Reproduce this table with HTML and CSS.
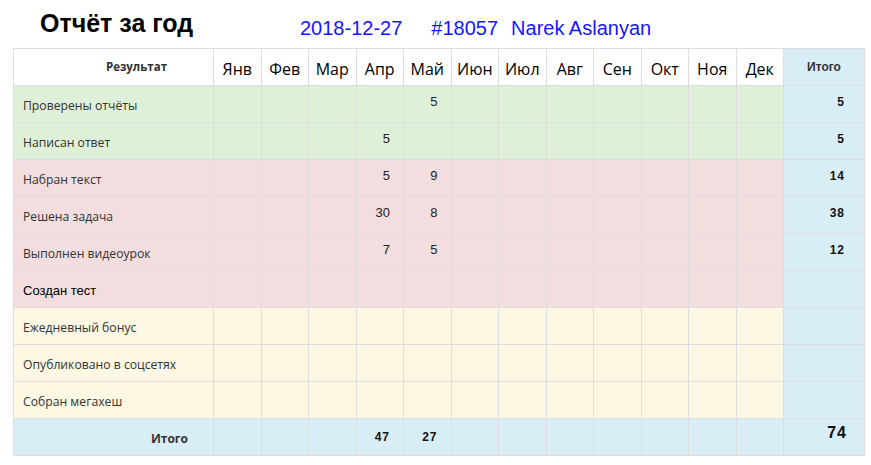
FILE: index.html
```
<!DOCTYPE html>
<html lang="ru">
<head>
  <meta charset="UTF-8" />
  <title>Отчёт за год</title>
  <link rel="stylesheet" href="styles.css">
</head>
<body>

<div class="top">
  <h2>Отчёт за год</h2>
  <div class="meta">
    <span>2018-12-27</span>
    <span class="num">#18057</span>
    <span class="name">Narek Aslanyan</span>
  </div>
</div>

<table class="report">
  <colgroup>
    <col class="c-label">
    <col class="c-month"><col class="c-month"><col class="c-month"><col class="c-month">
    <col class="c-month"><col class="c-month"><col class="c-month"><col class="c-month">
    <col class="c-month"><col class="c-month"><col class="c-month"><col class="c-month">
    <col class="c-total">
  </colgroup>
  <thead>
    <tr>
      <th class="label-head">Результат</th>
      <th class="month">Янв</th>
      <th class="month">Фев</th>
      <th class="month">Мар</th>
      <th class="month">Апр</th>
      <th class="month">Май</th>
      <th class="month">Июн</th>
      <th class="month">Июл</th>
      <th class="month">Авг</th>
      <th class="month">Сен</th>
      <th class="month">Окт</th>
      <th class="month">Ноя</th>
      <th class="month">Дек</th>
      <th class="total-head">Итого</th>
    </tr>
  </thead>
  <tbody>
    <tr class="success">
      <td class="label">Проверены отчёты</td>
      <td></td><td></td><td></td><td></td><td class="n">5</td><td></td><td></td><td></td><td></td><td></td><td></td><td></td>
      <td class="total">5</td>
    </tr>
    <tr class="success">
      <td class="label">Написан ответ</td>
      <td></td><td></td><td></td><td class="n">5</td><td></td><td></td><td></td><td></td><td></td><td></td><td></td><td></td>
      <td class="total">5</td>
    </tr>
    <tr class="danger">
      <td class="label">Набран текст</td>
      <td></td><td></td><td></td><td class="n">5</td><td class="n">9</td><td></td><td></td><td></td><td></td><td></td><td></td><td></td>
      <td class="total">14</td>
    </tr>
    <tr class="danger">
      <td class="label">Решена задача</td>
      <td></td><td></td><td></td><td class="n">30</td><td class="n">8</td><td></td><td></td><td></td><td></td><td></td><td></td><td></td>
      <td class="total">38</td>
    </tr>
    <tr class="danger">
      <td class="label">Выполнен видеоурок</td>
      <td></td><td></td><td></td><td class="n">7</td><td class="n">5</td><td></td><td></td><td></td><td></td><td></td><td></td><td></td>
      <td class="total">12</td>
    </tr>
    <tr class="danger">
      <td class="label plain">Создан тест</td>
      <td></td><td></td><td></td><td></td><td></td><td></td><td></td><td></td><td></td><td></td><td></td><td></td>
      <td class="total"></td>
    </tr>
    <tr class="warning">
      <td class="label">Ежедневный бонус</td>
      <td></td><td></td><td></td><td></td><td></td><td></td><td></td><td></td><td></td><td></td><td></td><td></td>
      <td class="total"></td>
    </tr>
    <tr class="warning">
      <td class="label">Опубликовано в соцсетях</td>
      <td></td><td></td><td></td><td></td><td></td><td></td><td></td><td></td><td></td><td></td><td></td><td></td>
      <td class="total"></td>
    </tr>
    <tr class="warning">
      <td class="label">Собран мегахеш</td>
      <td></td><td></td><td></td><td></td><td></td><td></td><td></td><td></td><td></td><td></td><td></td><td></td>
      <td class="total"></td>
    </tr>
  </tbody>
  <tfoot>
    <tr class="info">
      <td class="label-foot">Итого</td>
      <td></td><td></td><td></td><td class="n sum">47</td><td class="n sum">27</td><td></td><td></td><td></td><td></td><td></td><td></td><td></td>
      <td class="total grand">74</td>
    </tr>
  </tfoot>
</table>

</body>
</html>
```

FILE: styles.css
```
body {
  margin: 0;
  padding: 0 0 0 13px;
  font-family: "Open Sans", Arial, sans-serif;
  background: #fff;
}

.top {
  display: flex;
  align-items: flex-start;
  height: 48px;
}

.top h2 {
  flex-shrink: 0;
  margin: 11px 0 0 27px;
  width: 260px;
  font-family: "Liberation Sans", Arial, sans-serif;
  font-size: 25px;
  line-height: 25px;
  font-weight: bold;
  color: #000;
}

.meta {
  display: flex;
  margin-top: 18px;
  font-family: "Liberation Sans", Arial, sans-serif;
  font-size: 20px;
  line-height: 20px;
  color: #1515ff;
}

.meta .num {
  margin-left: 29px;
}

.meta .name {
  margin-left: 13px;
}

.report {
  border-collapse: collapse;
  width: 851px;
  table-layout: fixed;
}

.c-label { width: 200px; }
.c-month { width: 47.5px; }
.c-total { width: 81px; }

.report th,
.report td {
  box-sizing: border-box;
  border: 1px solid #ddd;
  height: 37px;
  padding: 0;
  line-height: 16px;
}

.label-head {
  font-size: 11.5px;
  font-weight: bold;
  color: #333;
  text-align: right;
  padding-right: 46px !important;
}

.month {
  font-size: 16px;
  font-weight: normal;
  color: #000;
  text-align: center;
  padding-top: 3px !important;
}

.total-head {
  background: #d9edf7;
  font-family: "Liberation Sans", Arial, sans-serif;
  font-size: 12px;
  font-weight: bold;
  color: #333;
}

.success td { background: #dff0d8; }
.danger td { background: #f2dede; }
.warning td { background: #fcf8e3; }
.info td { background: #d9edf7; }

.report td.total { background: #d9edf7; }

.label {
  font-size: 12.2px;
  color: #333;
  padding-left: 9px !important;
  padding-top: 3px !important;
}

.label.plain {
  font-family: "Liberation Sans", Arial, sans-serif;
  font-size: 13px;
  color: #000;
}

.n {
  font-family: "Liberation Sans", Arial, sans-serif;
  font-size: 13px;
  color: #222;
  text-align: right;
  padding-right: 13px !important;
  padding-bottom: 4px !important;
}

.n.sum {
  font-weight: bold;
  font-size: 12px;
  letter-spacing: 1px;
  color: #111;
  padding-bottom: 1px !important;
}

.total {
  font-family: "Liberation Sans", Arial, sans-serif;
  font-size: 12px;
  font-weight: bold;
  letter-spacing: 1px;
  color: #111;
  text-align: right;
  padding-right: 19px !important;
  padding-bottom: 4px !important;
}

.total.grand {
  font-size: 16px;
  padding-right: 17px !important;
  padding-bottom: 8px !important;
}

.label-foot {
  font-size: 12px;
  font-weight: bold;
  color: #333;
  text-align: right;
  padding-right: 25px !important;
  padding-top: 3px !important;
}
```
